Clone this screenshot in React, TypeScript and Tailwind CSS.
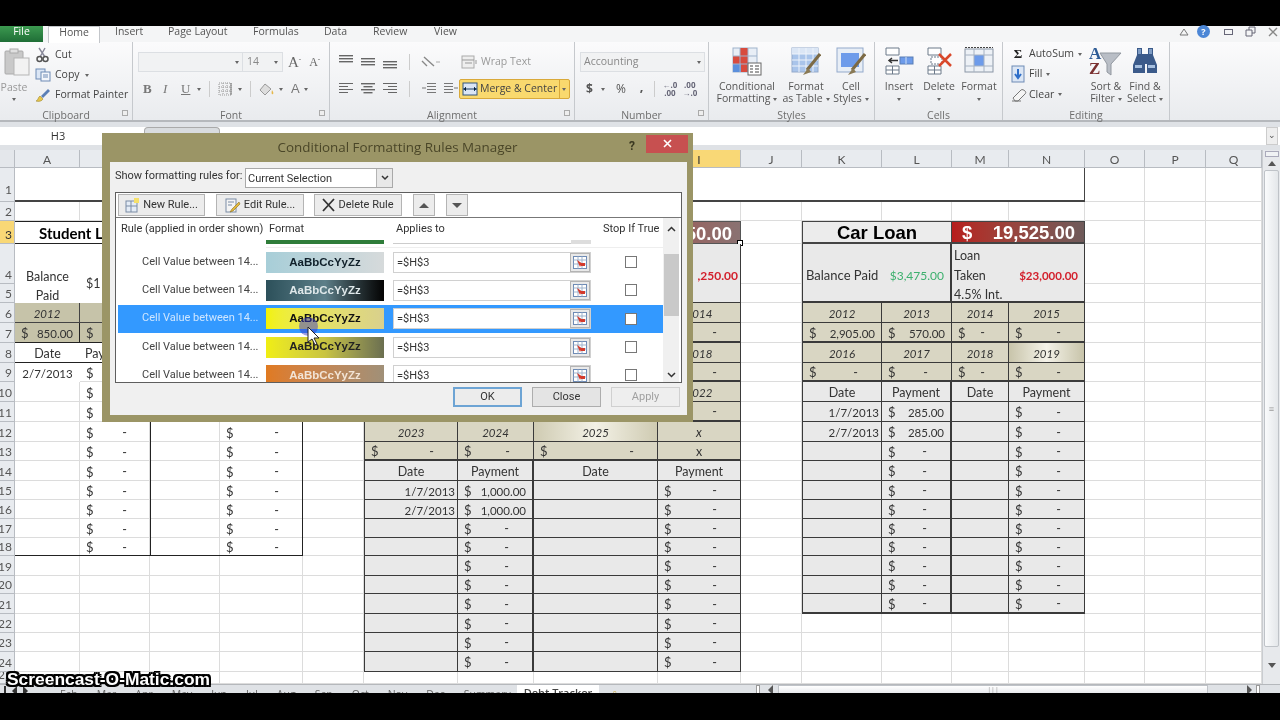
import type { ReactNode } from "react";

const COLS = ["A", "B", "C", "D", "E", "F", "G", "H", "I", "J", "K", "L", "M", "N", "O", "P", "Q"];
const ROW_COUNT = 25;

type Cell = { col: string; row: number; cs?: number; rs?: number; cls?: string; node?: ReactNode };

const box = "border-r border-b border-[#3a3a3a]";
const tan = "bg-[#d9d6c3]";
const gray = "bg-[#e9e9e9]";
const center = "justify-center";
const redText = "text-[#d3202c]";
const num = "text-[11.5px]";

function Acct({ v }: { v?: string }) {
  return (
    <div className="flex w-full items-center justify-between px-[6px]">
      <span className="text-[13px]">$</span>
      {v ? <span className={num}>{v}</span> : <span className="pr-[17px]">-</span>}
    </div>
  );
}

function buildCells(): Cell[] {
  const c: Cell[] = [];
  // row 1 banner
  c.push({ col: "A", row: 1, cs: 14, cls: "bg-white border-r border-b-2 border-[#444]" });

  // student loan block
  c.push({ col: "A", row: 3, cs: 5, cls: "bg-white border-y border-[#222] font-bold text-[15px] text-black", node: <span className="pl-[24px]">Student Loan</span> });
  c.push({ col: "A", row: 4, rs: 2, cls: `bg-white flex-col ${center}`, node: <span className="mt-[18px] text-center leading-[19px]">Balance<br />Paid</span> });
  c.push({ col: "B", row: 4, rs: 2, cls: "bg-white", node: <span className="pl-[6px] mt-[16px]">$1</span> });
  c.push({ col: "A", row: 6, cls: `bg-[#c6c3a9] italic ${num} ${center} border-r border-b border-[#444]`, node: "2012" });
  c.push({ col: "B", row: 6, cls: "bg-[#c6c3a9] border-b border-[#444]" });
  c.push({ col: "A", row: 7, cls: "bg-[#c6c3a9] border-r border-b border-[#222]", node: <Acct v="850.00" /> });
  c.push({ col: "B", row: 7, cls: "bg-[#c6c3a9] border-b border-[#222]", node: <Acct /> });
  c.push({ col: "A", row: 8, cls: `bg-white ${center} border-b border-[#222]`, node: "Date" });
  c.push({ col: "B", row: 8, cls: "bg-white border-b border-[#222]", node: <span className="pl-[5px]">Payment</span> });
  c.push({ col: "A", row: 9, cls: `bg-white ${num} ${center}`, node: "2/7/2013" });
  c.push({ col: "B", row: 9, node: <Acct /> });
  for (let r = 10; r <= 18; r++) {
    c.push({ col: "B", row: r, cls: r === 18 ? "border-b border-[#222]" : "", node: <Acct /> });
    c.push({ col: "C", row: r, cls: `border-l border-[#222] ${r === 18 ? "border-b" : ""}` });
    c.push({ col: "D", row: r, cls: `border-r border-[#222] ${r === 18 ? "border-b" : ""}`, node: <Acct /> });
  }
  c.push({ col: "A", row: 18, cls: "border-b border-[#222]" });

  // middle block, mostly behind the dialog
  c.push({ col: "H", row: 3, cs: 2, cls: "bg-gradient-to-r from-[#b02a2a] to-[#8a7272] border border-[#555] font-['Liberation_Sans',sans-serif] font-bold text-[18.5px] text-white justify-end", node: <><span className="pr-[8px]">50.00</span><span className="absolute -right-[3px] -bottom-[3px] w-[6px] h-[6px] bg-white border border-black" /></> });
  c.push({ col: "I", row: 4, rs: 2, cls: `${gray} ${box} justify-end font-bold ${redText} text-[12px]`, node: <span className="pr-[2px]">,250.00</span> });
  c.push({ col: "I", row: 6, cls: `${tan} ${box} italic ${num} ${center}`, node: "2014" });
  c.push({ col: "I", row: 7, cls: `${tan} ${box} border-b-2`, node: <Acct /> });
  c.push({ col: "I", row: 8, cls: `${tan} ${box} italic ${num} ${center}`, node: "2018" });
  c.push({ col: "I", row: 9, cls: `${tan} ${box} border-b-2`, node: <Acct /> });
  c.push({ col: "I", row: 10, cls: `${tan} ${box} italic ${num} ${center}`, node: "2022" });
  c.push({ col: "I", row: 11, cls: `${tan} ${box} border-b-2`, node: <Acct /> });
  c.push({ col: "F", row: 12, cls: `${tan} ${box} border-l italic ${num} ${center}`, node: "2023" });
  c.push({ col: "G", row: 12, cls: `${tan} ${box} italic ${num} ${center}`, node: "2024" });
  c.push({ col: "H", row: 12, cls: `bg-gradient-to-r from-[#cfcbb2] via-[#f3f1e6] to-[#cfcbb2] ${box} italic ${num} ${center}`, node: "2025" });
  c.push({ col: "I", row: 12, cls: `${tan} ${box} italic ${center}`, node: "x" });
  c.push({ col: "F", row: 13, cls: `${tan} ${box} border-l border-b-2`, node: <Acct /> });
  c.push({ col: "G", row: 13, cls: `${tan} ${box} border-b-2`, node: <Acct /> });
  c.push({ col: "H", row: 13, cls: `${tan} ${box} border-b-2`, node: <Acct /> });
  c.push({ col: "I", row: 13, cls: `${tan} ${box} border-b-2 ${center}`, node: "x" });
  c.push({ col: "F", row: 14, cls: `${gray} ${box} border-l ${center}`, node: "Date" });
  c.push({ col: "G", row: 14, cls: `${gray} ${box} border-r-2 ${center}`, node: "Payment" });
  c.push({ col: "H", row: 14, cls: `${gray} ${box} ${center}`, node: "Date" });
  c.push({ col: "I", row: 14, cls: `${gray} ${box} ${center}`, node: "Payment" });
  for (let r = 15; r <= 24; r++) {
    const paid = r < 17;
    c.push({ col: "F", row: r, cls: `${gray} ${box} border-l justify-end ${num}`, node: paid ? <span className="pr-[2px]">{r === 15 ? "1/7/2013" : "2/7/2013"}</span> : null });
    c.push({ col: "G", row: r, cls: `${gray} ${box} border-r-2`, node: paid ? <Acct v="1,000.00" /> : <Acct /> });
    c.push({ col: "H", row: r, cls: `${gray} ${box}` });
    c.push({ col: "I", row: r, cls: `${gray} ${box}`, node: <Acct /> });
  }

  // car loan block
  c.push({ col: "K", row: 3, cs: 2, cls: `bg-[#ececec] border border-[#444] border-b-2 ${center} font-['Liberation_Sans',sans-serif] font-bold text-[18.5px] text-black`, node: "Car Loan" });
  c.push({
    col: "M",
    row: 3,
    cs: 2,
    cls: "bg-gradient-to-r from-[#b71c1c] to-[#6e5a5a] border-y border-r border-[#444] border-b-2 font-['Liberation_Sans',sans-serif] font-bold text-[18.5px] text-white",
    node: <div className="flex w-full justify-between pl-[10px] pr-[9px]"><span>$</span><span>19,525.00</span></div>,
  });
  c.push({
    col: "K",
    row: 4,
    rs: 2,
    cs: 2,
    cls: `${gray} ${box} border-l border-b-2 border-r-2`,
    node: <div className="flex w-full items-center justify-between pl-[3px] pr-[6px]"><span className="text-[13px]">Balance Paid</span><span className="text-[12px] text-[#3db06e]">$3,475.00</span></div>,
  });
  c.push({
    col: "M",
    row: 4,
    rs: 2,
    cs: 2,
    cls: `${gray} ${box} border-b-2`,
    node: (
      <div className="flex w-full items-center justify-between pl-[2px] pr-[6px]">
        <span className="leading-[19.5px]">Loan<br />Taken<br />4.5% Int.</span>
        <span className={`font-bold text-[11.5px] ${redText}`}>$23,000.00</span>
      </div>
    ),
  });
  const carTop = [["2012", "2013", "2014", "2015"], ["2016", "2017", "2018", "2019"]];
  const carCols = ["K", "L", "M", "N"];
  carTop.forEach((years, i) => {
    years.forEach((y, j) => {
      const fancy = y === "2019";
      c.push({
        col: carCols[j],
        row: 6 + i * 2,
        cls: `${fancy ? "bg-gradient-to-r from-[#c8c4aa] via-[#f4f2e8] to-[#c8c4aa]" : tan} ${box} ${j === 0 ? "border-l" : ""} italic ${num} ${center}`,
        node: y,
      });
    });
  });
  const firstVals = ["2,905.00", "570.00"];
  carCols.forEach((k, j) => {
    c.push({ col: k, row: 7, cls: `${tan} ${box} ${j === 0 ? "border-l" : ""} border-b-2`, node: <Acct v={firstVals[j]} /> });
    c.push({ col: k, row: 9, cls: `${tan} ${box} ${j === 0 ? "border-l" : ""} border-b-2`, node: <Acct /> });
  });
  const heads = ["Date", "Payment", "Date", "Payment"];
  carCols.forEach((k, j) => {
    c.push({ col: k, row: 10, cls: `${gray} ${box} ${j === 0 ? "border-l" : ""} ${j === 1 ? "border-r-2" : ""} ${center}`, node: heads[j] });
  });
  for (let r = 11; r <= 21; r++) {
    const paid = r < 13;
    c.push({ col: "K", row: r, cls: `${gray} ${box} border-l justify-end ${num} ${r === 21 ? "border-b-2" : ""}`, node: paid ? <span className="pr-[2px]">{r === 11 ? "1/7/2013" : "2/7/2013"}</span> : null });
    c.push({ col: "L", row: r, cls: `${gray} ${box} border-r-2 ${r === 21 ? "border-b-2" : ""}`, node: paid ? <Acct v="285.00" /> : <Acct /> });
    c.push({ col: "M", row: r, cls: `${gray} ${box} ${r === 21 ? "border-b-2" : ""}` });
    c.push({ col: "N", row: r, cls: `${gray} ${box} ${r === 21 ? "border-b-2" : ""}`, node: <Acct /> });
  }
  return c;
}

function cellPad(row: number) {
  if (row === 3) return "pt-[2px]";
  if (row === 4) return "pt-[6px]";
  return "pt-[3px]";
}

function Sheet() {
  const rows = Array.from({ length: ROW_COUNT }, (_, i) => i + 1);
  const cells = buildCells();
  return (
    <div className="grid w-[1262px] grid-cols-[15px_65px_70px_70px_83px_61px_94px_76px_124px_83px_61px_80px_70px_57px_76px_60px_61px_56px] grid-rows-[18px_34px_19px_23px_40px_19px_20px_20px_20px_19px_20px_20px_20px_19px_20px_19px_19px_19px_18px_20px_18px_20px_19px_19px_20px_12px] font-['Lato',sans-serif] text-[12.5px] text-[#333] bg-white">
      <div className="bg-[#e4e7eb] border-r border-b border-[#b8bcc2]" style={{ gridColumn: 1, gridRow: 1 }} />
      {COLS.map((l, i) => (
        <div
          key={l}
          className={`flex items-center justify-center pt-[3px] border-r border-b border-[#b8bcc2] text-[12px] ${l === "I" ? "bg-[#f9d876]" : "bg-[#e8ebef] text-[#555]"}`}
          style={{ gridColumn: i + 2, gridRow: 1 }}
        >
          {l}
        </div>
      ))}
      {rows.map((r) => (
        <div
          key={r}
          className={`flex items-end justify-end pr-[2px] border-r border-b border-[#b8bcc2] text-[12px] leading-none overflow-hidden ${r === 1 ? "pb-[5px]" : "pb-[2px]"} ${r === 3 ? "bg-[#f9d876]" : "bg-[#e8ebef] text-[#555]"}`}
          style={{ gridColumn: 1, gridRow: r + 1 }}
        >
          {r}
        </div>
      ))}
      {rows.map((r) =>
        COLS.map((l, i) => (
          <div key={`${l}${r}`} className="border-r border-b border-[#dcdcdc]" style={{ gridColumn: i + 2, gridRow: r + 1 }} />
        ))
      )}
      {cells.map((c, i) => (
        <div
          key={i}
          className={`relative flex items-center whitespace-nowrap ${cellPad(c.row)} ${c.cls ?? ""}`}
          style={{ gridColumn: `${COLS.indexOf(c.col) + 2} / span ${c.cs ?? 1}`, gridRow: `${c.row + 1} / span ${c.rs ?? 1}` }}
        >
          {c.node}
        </div>
      ))}
    </div>
  );
}

/* ---------- ribbon icons ---------- */

function Lines({ ws, y = 3, color = "#666" }: { ws: number[]; y?: number; color?: string }) {
  return (
    <svg width="16" height="14" viewBox="0 0 16 14">
      {ws.map((w, i) => (
        <rect key={i} x={(16 - w) / 2} y={y + i * 3} width={w} height="1.4" fill={color} />
      ))}
    </svg>
  );
}

function Caret({ cls = "" }: { cls?: string }) {
  return <span className={`inline-block w-0 h-0 border-x-[2.5px] border-x-transparent border-t-[3px] border-t-[#666] ${cls}`} />;
}

function BigIcon({ kind }: { kind: string }) {
  if (kind === "cond")
    return (
      <svg width="30" height="30" viewBox="0 0 30 30">
        <rect x="1" y="2" width="24" height="24" fill="#e8eef6" stroke="#9fb3cc" />
        <rect x="8" y="2" width="8" height="8" fill="#d84b3e" />
        <rect x="1" y="10" width="15" height="8" fill="#d84b3e" />
        <rect x="1" y="18" width="8" height="8" fill="#5b8fdc" />
        <rect x="9" y="18" width="7" height="8" fill="#d84b3e" />
        <path d="M8 2v24M16 2v24M1 10h24M1 18h24" stroke="#9fb3cc" />
        <rect x="16" y="17" width="13" height="12" fill="#fff" stroke="#666" />
        <path d="M18 20h3M18 23h3M18 26h3M23 20h4M23 23h4M23 26h4" stroke="#444" />
      </svg>
    );
  if (kind === "table")
    return (
      <svg width="30" height="30" viewBox="0 0 30 30">
        <rect x="1" y="2" width="26" height="24" fill="#a9c4ea" stroke="#93aacb" />
        <rect x="1" y="2" width="26" height="6" fill="#dbe6f5" />
        <path d="M8 2v24M15 2v24M22 2v24M1 8h26M1 14h26M1 20h26" stroke="#eef3fa" />
        <path d="M29 8 16 24" stroke="#7c6a45" strokeWidth="3" />
        <path d="M17 22l-5 7 8-3z" fill="#8a7a55" />
      </svg>
    );
  if (kind === "style")
    return (
      <svg width="30" height="30" viewBox="0 0 30 30">
        <rect x="1" y="2" width="26" height="24" fill="#e8eef6" stroke="#93aacb" />
        <rect x="5" y="7" width="18" height="14" fill="#6d9bea" />
        <path d="M29 8 16 24" stroke="#7c6a45" strokeWidth="3" />
        <path d="M17 22l-5 7 8-3z" fill="#8a7a55" />
      </svg>
    );
  if (kind === "insert")
    return (
      <svg width="30" height="30" viewBox="0 0 30 30">
        <path d="M2 2h13v7H2zM2 20h13v8H2zM8.500 20v8M2 24h13" fill="#fff" stroke="#6d7a8a" />
        <rect x="16" y="11" width="13" height="7" fill="#6d9bea" stroke="#5a7fb5" />
        <path d="M22 11v7" stroke="#cfe0f5" />
        <path d="M14 14.500H5M8 12l-3 2.500 3 2.500" fill="none" stroke="#333" strokeWidth="1.500" />
      </svg>
    );
  if (kind === "delete")
    return (
      <svg width="30" height="30" viewBox="0 0 30 30">
        <path d="M4 2h13v7H4zM4 20h13v8H4zM10.500 20v8M4 24h13" fill="#fff" stroke="#6d7a8a" />
        <rect x="7" y="11" width="11" height="7" fill="#fff" stroke="#6d7a8a" strokeDasharray="2 1" />
        <path d="M15 8 27 20M27 8 15 20" stroke="#d9482b" strokeWidth="2.500" />
      </svg>
    );
  if (kind === "format")
    return (
      <svg width="30" height="30" viewBox="0 0 30 30">
        <rect x="1" y="3" width="28" height="23" fill="#edf1f6" stroke="#8a96a6" />
        <rect x="10" y="9" width="10" height="11" fill="#6d9bea" />
        <path d="M10 3v23M20 3v23M1 9h28M1 20h28" stroke="#a6b2c2" />
        <path d="M1 1.500h28" stroke="#444" strokeDasharray="2 1" />
      </svg>
    );
  if (kind === "sort")
    return (
      <svg width="32" height="30" viewBox="0 0 32 30">
        <path d="M10 7 31 7 21 18V29L17 26V18Z" fill="#b9bec6" stroke="#9298a0" />
      </svg>
    );
  return (
    <svg width="30" height="30" viewBox="0 0 30 30">
      <path d="M7 2h5v6h6V2h5v7l4 10v8h-10v-9h-2v9H3v-8l4-10z" fill="#3b5a8a" />
      <path d="M5 19h7v3H5zM18 19h7v3h-7z" fill="#a7c0e0" />
      <path d="M8 3h3v5H8zM19 3h3v5h-3z" fill="#7f9cc4" />
    </svg>
  );
}

function SmallIcon({ kind }: { kind: string }) {
  if (kind === "cut")
    return (
      <svg width="14" height="16" viewBox="0 0 14 16">
        <path d="M3 1l6 9M9 1 4 10" stroke="#889" strokeWidth="1.400" />
        <circle cx="3.500" cy="12" r="2.500" fill="none" stroke="#555" strokeWidth="1.500" />
        <circle cx="9.500" cy="12" r="2.500" fill="none" stroke="#555" strokeWidth="1.500" />
      </svg>
    );
  if (kind === "copy")
    return (
      <svg width="16" height="14" viewBox="0 0 16 14">
        <rect x="1" y="1" width="9" height="10" fill="#dbe6f5" stroke="#6e8bb5" />
        <rect x="6" y="4" width="9" height="9" fill="#f3f6fb" stroke="#6e8bb5" />
        <path d="M8 7h5M8 9h5" stroke="#6e8bb5" />
      </svg>
    );
  if (kind === "painter")
    return (
      <svg width="16" height="16" viewBox="0 0 16 16">
        <path d="M6 9 13 2l2 2-7 7z" fill="#5a7fb5" />
        <path d="M1 14c2 0 2-4 4-5l3 3c-1 2-4 3-7 2z" fill="#e8c64b" stroke="#a08a30" strokeWidth=".6" />
      </svg>
    );
  if (kind === "fill")
    return (
      <svg width="14" height="18" viewBox="0 0 14 18">
        <rect x="1" y="1" width="12" height="16" fill="#dbe6f5" stroke="#6e8bb5" />
        <path d="M7 4v8M4 9l3 4 3-4" fill="none" stroke="#2f6fc9" strokeWidth="2" />
      </svg>
    );
  return (
    <svg width="16" height="14" viewBox="0 0 16 14">
      <path d="M2 10 10 2c1-1 3 0 4 1s1 2 0 3l-7 7H4z" fill="#f4f4f4" stroke="#777" />
      <path d="M1 13h9" stroke="#777" />
    </svg>
  );
}

function RibbonGroup({ w, label, launcher, children }: { w: string; label: string; launcher?: boolean; children: ReactNode }) {
  return (
    <div className={`flex flex-col h-full shrink-0 border-r border-[#c6c9cd] ${w}`}>
      <div className="flex-1 flex min-h-0">{children}</div>
      <div className="relative h-[16px] pt-[3px] text-center text-[10.5px] leading-[16px] text-[#6d6d6d]">
        {label}
        {launcher && <span className="absolute right-[4px] top-[6px] w-[6px] h-[6px] border border-[#aaa] bg-[#eee]" />}
      </div>
    </div>
  );
}

function BigButton({ kind, top, bottom, caret = true, w }: { kind: string; top: string; bottom?: string; caret?: boolean; w: string }) {
  return (
    <div className={`flex flex-col items-center shrink-0 ${w}`}>
      <div className="h-[34px] pt-[4px] flex items-start justify-center">
        <BigIcon kind={kind} />
      </div>
      <div className="mt-[4px] text-center text-[10.5px] leading-[12px] text-[#555] whitespace-nowrap">
        {top}
        <br />
        {bottom}
        {bottom && caret && <Caret cls="ml-[3px] mb-[1px]" />}
        {!bottom && <Caret cls="mb-[1px]" />}
      </div>
    </div>
  );
}

function Ribbon() {
  return (
    <div className="h-[80px] flex bg-gradient-to-b from-[#fbfbfc] to-[#e9ebee] border-b-2 border-[#b5b8bc] font-['Open_Sans',sans-serif] text-[10.5px] text-[#555]">
      <RibbonGroup w="w-[133px]" label="Clipboard" launcher>
        <div className="w-[34px] flex flex-col items-center pt-[6px] text-[#999]">
          <svg width="26" height="28" viewBox="0 0 26 28">
            <rect x="1" y="3" width="18" height="23" rx="1" fill="#c9c9c9" stroke="#aaa" />
            <rect x="6" y="1" width="8" height="4" fill="#e0e0e0" stroke="#aaa" />
            <rect x="10" y="10" width="15" height="17" fill="#f2f2f2" stroke="#b5b5b5" />
          </svg>
          <span className="mt-[4px] -ml-[6px]">Paste</span>
          <Caret cls="-ml-[6px] mt-[2px]" />
        </div>
        <div className="flex flex-col pt-[3px]">
          <div className="h-[20px] shrink-0 flex items-center gap-[3px]"><span className="w-[18px] flex justify-center"><SmallIcon kind="cut" /></span><span className="text-[#444]">Cut</span></div>
          <div className="h-[20px] shrink-0 flex items-center gap-[3px]"><span className="w-[18px] flex justify-center"><SmallIcon kind="copy" /></span><span className="text-[#444]">Copy</span><Caret cls="ml-[2px]" /></div>
          <div className="h-[20px] shrink-0 flex items-center gap-[3px]"><span className="w-[18px] flex justify-center"><SmallIcon kind="painter" /></span><span className="text-[#444] whitespace-nowrap">Format Painter</span></div>
        </div>
      </RibbonGroup>

      <RibbonGroup w="w-[197px]" label="Font" launcher>
        <div className="flex flex-col pl-[5px] pt-[10px]">
          <div className="flex items-center h-[20px]">
            <div className="w-[105px] h-[20px] bg-[#f1f2f3] border border-[#dcdfe3] flex items-center justify-end pr-[3px]"><Caret /></div>
            <div className="w-[40px] h-[20px] bg-[#f1f2f3] border border-l-0 border-[#dcdfe3] flex items-center justify-between px-[4px] text-[#888]">14<Caret /></div>
            <span className="ml-[5px] font-['Liberation_Serif',serif] text-[15px] text-[#666]">A<sup className="text-[7px]">ˆ</sup></span>
            <span className="ml-[8px] font-['Liberation_Serif',serif] text-[12px] text-[#666]">A<sup className="text-[7px]">ˇ</sup></span>
          </div>
          <div className="flex items-center h-[20px] mt-[7px] pl-[5px] text-[#777] font-['Liberation_Serif',serif] text-[13px]">
            <b className="w-[20px]">B</b>
            <i className="w-[18px]">I</i>
            <u className="w-[12px]">U</u>
            <Caret cls="ml-[4px]" />
            <span className="ml-[8px] mr-[8px] w-px h-[16px] bg-[#ccc]" />
            <svg width="14" height="14" viewBox="0 0 14 14"><path d="M1 1h12v12H1zM5 1v12M9 1v12M1 5h12M1 9h12" fill="none" stroke="#999" strokeDasharray="1 1" /><path d="M13 1v12" stroke="#777" /></svg>
            <Caret cls="ml-[6px]" />
            <span className="ml-[8px] mr-[8px] w-px h-[16px] bg-[#ccc]" />
            <svg width="16" height="15" viewBox="0 0 16 15"><path d="M6 2 1 8l5 5 6-6z" fill="#ddd" stroke="#999" /><path d="M13 8c1 2 2 3 1 4s-2 0-1-4z" fill="#e6b84a" /></svg>
            <Caret cls="ml-[4px]" />
            <span className="ml-[8px] font-['Liberation_Sans',sans-serif] text-[13px]">A</span>
            <Caret cls="ml-[4px]" />
          </div>
        </div>
      </RibbonGroup>

      <RibbonGroup w="w-[245px]" label="Alignment" launcher>
        <div className="flex flex-col pl-[8px] pt-[10px] w-[129px]">
          <div className="flex items-center h-[20px] gap-[6px]">
            <Lines ws={[14, 14, 14]} y={0} />
            <Lines ws={[14, 14, 14]} y={3} />
            <Lines ws={[14, 14, 14]} y={6} />
            <span className="mx-[5px] w-px h-[16px] bg-[#ccc]" />
            <svg width="20" height="14" viewBox="0 0 20 14"><path d="M3 2 13 11M1 6l5 5" stroke="#888" strokeWidth="1.400" /><path d="M15 7h4" stroke="#aaa" /></svg>
          </div>
          <div className="flex items-center h-[20px] mt-[7px] gap-[6px]">
            <svg width="16" height="14" viewBox="0 0 16 14"><path d="M1 1.500h14M1 4.500h9M1 7.500h14M1 10.500h9" stroke="#666" strokeWidth="1.200" /></svg>
            <Lines ws={[14, 9, 14, 9]} y={1} />
            <svg width="16" height="14" viewBox="0 0 16 14"><path d="M1 1.500h14M6 4.500h9M1 7.500h14M6 10.500h9" stroke="#666" strokeWidth="1.200" /></svg>
            <span className="mx-[5px] w-px h-[16px] bg-[#ccc]" />
            <svg width="16" height="14" viewBox="0 0 16 14"><path d="M6 1.500h9M6 4.500h9M6 7.500h9M6 10.500h9M1 6h4" stroke="#777" strokeWidth="1.200" /></svg>
            <svg width="16" height="14" viewBox="0 0 16 14"><path d="M1 1.500h9M1 4.500h9M1 7.500h9M1 10.500h9M11 6h4" stroke="#777" strokeWidth="1.200" /></svg>
          </div>
        </div>
        <div className="flex flex-col pt-[10px] w-[111px]">
          <div className="h-[20px] flex items-center gap-[2px] pl-[2px] text-[#999]">
            <svg width="18" height="14" viewBox="0 0 18 14"><rect x="1" y="1" width="12" height="12" fill="#eee" stroke="#aaa" /><path d="M1 5h12M4 8h7M15 5v4" stroke="#999" /></svg>
            Wrap Text
          </div>
          <div className="h-[20px] mt-[7px] flex items-center bg-[#f9d96e] border border-[#d9a93a] rounded-[2px] text-[#444] whitespace-nowrap">
            <svg className="mx-[2px] shrink-0" width="16" height="14" viewBox="0 0 16 14"><rect x="1" y="1" width="14" height="12" fill="#dbe6f5" stroke="#33567d" /><path d="M1 7h14M4 5 2 7l2 2M12 5l2 2-2 2" stroke="#1c3e63" /></svg>
            Merge &amp; Center
            <span className="ml-[2px] h-full flex items-center border-l border-[#d9a93a] pl-[2px]"><Caret /></span>
          </div>
        </div>
      </RibbonGroup>

      <RibbonGroup w="w-[134px]" label="Number" launcher>
        <div className="flex flex-col pl-[5px] pt-[10px]">
          <div className="w-[125px] h-[20px] bg-[#f1f2f3] border border-[#dcdfe3] flex items-center justify-between px-[3px] text-[#888]">Accounting<Caret /></div>
          <div className="flex items-center h-[20px] mt-[7px] text-[#555]">
            <b className="ml-[6px] text-[12px]">$</b>
            <Caret cls="ml-[8px]" />
            <span className="ml-[11px] text-[12px]">%</span>
            <b className="ml-[14px] text-[13px] -mt-[4px]">,</b>
            <span className="ml-[10px] mr-[8px] w-px h-[16px] bg-[#ccc]" />
            <span className="text-[8px] leading-[8px] text-center font-bold text-[#667]">←.0<br />.00</span>
            <span className="ml-[5px] text-[8px] leading-[8px] text-center font-bold text-[#667]">.00<br />→.0</span>
          </div>
        </div>
      </RibbonGroup>

      <RibbonGroup w="w-[166px]" label="Styles">
        <BigButton kind="cond" top="Conditional" bottom="Formatting" w="w-[76px]" />
        <BigButton kind="table" top="Format" bottom="as Table" w="w-[42px]" />
        <BigButton kind="style" top="Cell" bottom="Styles" w="w-[48px]" />
      </RibbonGroup>

      <RibbonGroup w="w-[128px]" label="Cells">
        <div className="flex pl-[4px]">
          <BigButton kind="insert" top="Insert" w="w-[40px]" />
          <BigButton kind="delete" top="Delete" w="w-[40px]" />
          <BigButton kind="format" top="Format" w="w-[40px]" />
        </div>
      </RibbonGroup>

      <RibbonGroup w="w-[167px]" label="Editing">
        <div className="w-[84px] flex flex-col pl-[8px] pt-[2px] text-[#444]">
          <div className="h-[20px] shrink-0 flex items-center gap-[4px]"><b className="w-[14px] text-center text-[13px] font-['Liberation_Serif',serif] text-[#222]">Σ</b>AutoSum<Caret /></div>
          <div className="h-[20px] shrink-0 flex items-center gap-[4px]"><span className="w-[14px]"><SmallIcon kind="fill" /></span>Fill<Caret /></div>
          <div className="h-[21px] shrink-0 flex items-center gap-[4px]"><span className="w-[14px]"><SmallIcon kind="clear" /></span>Clear<Caret /></div>
        </div>
        <div className="relative">
          <BigButton kind="sort" top="Sort &" bottom="Filter" w="w-[38px]" />
          <span className="absolute left-[2px] top-[4px] font-['Liberation_Serif',serif] font-bold text-[17px] leading-[15px] text-[#2f5c96]">A<br /><span className="text-[#7a3030]">Z</span></span>
        </div>
        <BigButton kind="find" top="Find &" bottom="Select" w="w-[40px]" />
      </RibbonGroup>
    </div>
  );
}

function TitleTabs() {
  const tabs = [
    ["Insert", "w-[26px]"],
    ["Page Layout", "w-[58px]"],
    ["Formulas", "w-[44px]"],
    ["Data", "w-[22px]"],
    ["Review", "w-[34px]"],
    ["View", "w-[22px]"],
  ];
  return (
    <div className="h-[16px] flex items-center bg-[#f4f5f6] font-['Open_Sans',sans-serif] text-[10.5px] text-[#555]">
      <div className="w-[43px] h-full bg-gradient-to-b from-[#3c9a50] to-[#1f6e37] text-white text-center leading-[10px]">File</div>
      <div className="ml-[5px] w-[52px] h-[17px] bg-white border-x border-t border-[#c3c6ca] text-center leading-[11px] self-start z-10">Home</div>
      <div className="flex ml-[15px] gap-[27px] -mt-[4px]">
        {tabs.map(([t, w]) => (
          <span key={t} className={`whitespace-nowrap ${w}`}>{t}</span>
        ))}
      </div>
      <div className="ml-auto flex items-center pr-[2px] -mt-[5px]">
        <svg width="10" height="10" viewBox="0 0 10 10"><path d="M1 8 5 2l4 6z" fill="none" stroke="#777" /></svg>
        <span className="ml-[8px] w-[13px] h-[13px] rounded-full bg-[#4b86d6] text-white text-[9px] leading-[13px] text-center font-bold">?</span>
        <span className="ml-[14px] w-[9px] h-[6px] border border-[#667] " />
        <svg className="ml-[12px]" width="11" height="11" viewBox="0 0 11 11"><path d="M1 4h6v6H1zM4 4V1h6v6H7" fill="none" stroke="#667" /></svg>
        <svg className="ml-[12px]" width="10" height="10" viewBox="0 0 10 10"><path d="M1 1l8 8M9 1 1 9" stroke="#888" strokeWidth="1.400" /></svg>
      </div>
    </div>
  );
}

function FormulaBar() {
  return (
    <div className="h-[28px] pt-[5px] bg-[#dfe2e6] font-['Open_Sans',sans-serif] text-[11px] text-[#333]">
      <div className="flex h-[18px] bg-white">
        <div className="w-[102px] text-center pl-[14px] leading-[18px]">H3</div>
        <div className="ml-[42px] w-[76px] h-[6px] bg-[#d9dcdf] border-x border-t border-[#aaa] rounded-t-[4px]" />
        <div className="flex-1" />
        <div className="w-[12px] mr-[2px] text-center text-[9px] text-[#555] border border-[#ccc] bg-[#eee]">⌄</div>
      </div>
    </div>
  );
}

function VScroll() {
  return (
    <div className="w-[18px] flex flex-col items-center bg-[#e7e9ec] border-l border-[#c9ccd0]">
      <div className="w-[14px] h-[6px] mt-[1px] bg-[#f0f2f4] border border-[#aab]" />
      <div className="h-[13px] flex items-center"><span className="w-0 h-0 border-x-[4px] border-x-transparent border-b-[5px] border-b-[#555]" /></div>
      <div className="w-[15px] h-[477px] bg-gradient-to-r from-[#fafbfc] to-[#e4e7ea] border border-[#bfc3c8] rounded-[2px] flex items-center justify-center mt-[0px]">
        <span className="text-[9px] text-[#999] leading-none">≡</span>
      </div>
      <div className="flex-1 flex items-center"><span className="w-0 h-0 border-x-[4px] border-x-transparent border-t-[5px] border-t-[#555]" /></div>
    </div>
  );
}

function SheetTabs() {
  const names = ["Feb", "Mar", "Apr", "May", "Jun", "Jul", "Aug", "Sep", "Oct", "Nov", "Dec", "Summary"];
  return (
    <div className="h-[9px] flex bg-[#dfe2e6] overflow-hidden font-['Open_Sans',sans-serif] text-[10.5px] leading-[14px] text-[#666] border-t border-[#b5b8bc]">
      <div className="w-[60px] pl-[4px] flex gap-[6px] pt-[1px]">
        <span className="w-[2px] h-[8px] bg-[#333]" />
        <span className="w-0 h-0 border-y-[5px] border-y-transparent border-r-[5px] border-r-[#333]" />
        <span className="w-0 h-0 border-y-[5px] border-y-transparent border-l-[5px] border-l-[#333]" />
      </div>
      <div className="w-[457px] flex gap-[19px] pt-[2px] whitespace-nowrap">
        {names.map((n) => <span key={n}>{n}</span>)}
      </div>
      <div className="w-[82px] -mt-[1px] text-center bg-white font-semibold text-[11px] text-[#444] whitespace-nowrap pt-[2px]">Debt Tracker</div>
      <div className="ml-[12px] text-[#c8a030] pt-[1px]">♀</div>
      <div className="flex-1" />
      <div className="w-[524px] flex items-start relative">
        <span className="w-[4px] h-[9px] border border-[#999] bg-white" />
        <span className="ml-[8px] w-0 h-0 border-y-[5px] border-y-transparent border-r-[5px] border-r-[#555]" />
        <div className="ml-[5px] w-[430px] h-[9px] bg-gradient-to-b from-white to-[#e8eaee] border border-[#bfc3c8] text-center text-[7px] leading-[8px] text-[#999]">|||</div>
        <div className="flex-1" />
        <span className="w-0 h-0 border-y-[5px] border-y-transparent border-l-[5px] border-l-[#555]" />
        <span className="ml-[4px] mr-[20px] w-[4px] h-[9px] border border-[#999] bg-white" />
      </div>
    </div>
  );
}

/* ---------- dialog ---------- */

const swatches = [
  { cls: "bg-gradient-to-r from-[#a7ced8] to-[#d6dadb]", text: "text-[#10202a]" },
  { cls: "bg-gradient-to-r from-[#2c505a] via-[#5d7f89] to-[#050505]", text: "text-[#dfe8ea]" },
  { cls: "bg-gradient-to-r from-[#f2f200] to-[#d9d08d]", text: "text-[#111]" },
  { cls: "bg-gradient-to-r from-[#f0ee10] via-[#c9c440] to-[#6b6f50]", text: "text-[#222]" },
  { cls: "bg-gradient-to-r from-[#e07a20] to-[#a09078]", text: "text-[#f2e4d6]" },
];

function RangeBtn() {
  return (
    <div className="w-[20px] h-full flex items-center justify-center bg-[#e9e9e9] border border-[#b4b4b4]">
      <svg width="14" height="13" viewBox="0 0 14 13">
        <rect x=".5" y=".5" width="13" height="12" fill="#fff" stroke="#6e8bb5" />
        <path d="M.5 4h13M.5 8h13M5 .5v12M9 .5v12" stroke="#9fb3cc" />
        <path d="M4 4l6 4-2 1-1 2z" fill="#d33a2c" />
        <rect x="8" y="7" width="4" height="3" fill="#d33a2c" />
      </svg>
    </div>
  );
}

function RuleRow({ i }: { i: number }) {
  const s = swatches[i];
  const selected = i === 2;
  return (
    <div className={`h-[28.3px] shrink-0 ml-[2px] flex items-center pl-[24px] ${selected ? "bg-[#3399ff] text-[#cfe6ff]" : "text-[#444]"}`}>
      <span className="w-[124px] whitespace-nowrap">Cell Value between 14...</span>
      <div className={`w-[118px] h-[21px] shrink-0 flex items-center justify-center font-['Liberation_Sans',sans-serif] font-bold text-[11.5px] ${s.cls} ${s.text}`}>AaBbCcYyZz</div>
      <div className="ml-[9px] w-[198px] h-[21px] flex bg-white border border-[#d0d0d0]">
        <span className="flex-1 pl-[3px] leading-[19px] text-[#333]">=$H$3</span>
        <RangeBtn />
      </div>
      <span className="ml-[34px] w-[12px] h-[12px] bg-white border border-[#777]" />
    </div>
  );
}

function DialogBtn({ label, w, cls = "", icon }: { label: string; w: string; cls?: string; icon?: ReactNode }) {
  return (
    <div className={`h-[22px] flex items-center justify-center gap-[3px] bg-[#ececec] border border-[#b4b4b4] text-[#333] ${w} ${cls}`}>
      {icon}
      {label}
    </div>
  );
}

function Dialog() {
  return (
    <div className="absolute left-[102px] top-[133px] w-[591px] h-[289px] flex flex-col bg-[#9b9566] pl-[8px] pr-[6px] pb-[7px] font-['Roboto',sans-serif] text-[11px] text-[#333]">
      <div className="h-[29px] shrink-0 flex items-center -ml-[8px] -mr-[6px]">
        <div className="flex-1 text-center font-['Open_Sans',sans-serif] text-[13.4px] text-[#4a4628] pl-[64px]">Conditional Formatting Rules Manager</div>
        <span className="mb-[4px] mr-[11px] font-bold text-[12px] text-[#3a3820]">?</span>
        <div className="w-[42px] h-[18px] mb-[8px] mr-[5px] bg-[#c75050] flex items-center justify-center">
          <svg width="9" height="9" viewBox="0 0 9 9"><path d="M1 1l7 7M8 1 1 8" stroke="#fff" strokeWidth="1.600" /></svg>
        </div>
      </div>
      <div className="flex-1 min-h-0 bg-[#f0f0f0] px-[5px] flex flex-col">
        <div className="h-[20px] mt-[6px] shrink-0 flex items-center">
          <span className="w-[130px] -mt-[4px] whitespace-nowrap">Show formatting rules for:</span>
          <div className="w-[148px] h-[20px] flex bg-white border border-[#a9a9a9]">
            <span className="flex-1 pl-[2px] leading-[19px]">Current Selection</span>
            <span className="w-[16px] flex items-center justify-center bg-[#e8e8e8] border-l border-[#b4b4b4] text-[#333]">
              <svg width="8" height="6" viewBox="0 0 8 6"><path d="M1 1l3 3 3-3" fill="none" stroke="#333" strokeWidth="1.500" /></svg>
            </span>
          </div>
        </div>

        <div className="mt-[4px] h-[191px] shrink-0 flex flex-col bg-white border border-[#5e5e5e] overflow-hidden">
          <div className="h-[25px] shrink-0 flex items-start pt-[1px] pl-[2px] bg-white border-b border-[#777]">
            <DialogBtn
              label="New Rule..."
              w="w-[87px]"
              icon={
                <svg width="15" height="15" viewBox="0 0 15 15"><rect x="1" y="3" width="11" height="11" fill="#e4ecf6" stroke="#7a8ca5" /><path d="M1 8h11M6 3v11" stroke="#7a8ca5" /><rect x="9" y="0" width="5" height="5" fill="#f5e06a" /></svg>
              }
            />
            <DialogBtn
              label="Edit Rule..."
              w="w-[88px]"
              cls="ml-[11px]"
              icon={
                <svg width="16" height="15" viewBox="0 0 16 15"><rect x="1" y="1" width="10" height="13" fill="#f4f4f4" stroke="#7a8ca5" /><path d="M3 4h6M3 7h4" stroke="#7a8ca5" /><path d="M14 4 7 11l-2 3 3-1 7-7z" fill="#e3b93c" stroke="#8a6f20" strokeWidth=".6" /></svg>
              }
            />
            <DialogBtn
              label="Delete Rule"
              w="w-[88px]"
              cls="ml-[10px]"
              icon={
                <svg width="13" height="14" viewBox="0 0 13 14"><path d="M1 1l11 12M12 1 1 13" stroke="#333" strokeWidth="1.800" /></svg>
              }
            />
            <div className="ml-[11px] w-[22px] h-[22px] flex items-center justify-center bg-[#ececec] border border-[#b4b4b4]"><span className="w-0 h-0 border-x-[5px] border-x-transparent border-b-[5px] border-b-[#555]" /></div>
            <div className="ml-[11px] w-[22px] h-[22px] flex items-center justify-center bg-[#ececec] border border-[#b4b4b4]"><span className="w-0 h-0 border-x-[5px] border-x-transparent border-t-[5px] border-t-[#555]" /></div>
          </div>
          <div className="flex flex-1 min-h-0">
            <div className="w-[547px] flex flex-col overflow-hidden">
              <div className="h-[22px] shrink-0 flex items-center whitespace-nowrap">
                <span className="w-[153px] pl-[5px]">Rule (applied in order shown)</span>
                <span className="w-[127px]">Format</span>
                <span className="w-[207px]">Applies to</span>
                <span>Stop If True</span>
              </div>
              <div className="h-[8px] shrink-0 ml-[150px] flex items-start border-b border-[#eee]">
                <div className="w-[118px] h-[4px] bg-[#2f7d3a]" />
                <div className="ml-[9px] w-[178px] h-[4px] border-b border-[#ccc]" />
                <div className="w-[20px] h-[4px] bg-[#ddd]" />
              </div>
              {[0, 1, 2, 3, 4].map((i) => <RuleRow key={i} i={i} />)}
            </div>
            <div className="w-[16px] flex flex-col items-center bg-[#f0f0f0]">
              <svg className="mt-[8px]" width="9" height="6" viewBox="0 0 9 6"><path d="M1 5l3.500-3.500L8 5" fill="none" stroke="#333" strokeWidth="1.500" /></svg>
              <div className="mt-[22px] w-[15px] h-[62px] bg-[#c9c9c9]" />
              <svg className="mt-auto mb-[4px]" width="9" height="6" viewBox="0 0 9 6"><path d="M1 1l3.500 3.500L8 1" fill="none" stroke="#333" strokeWidth="1.500" /></svg>
            </div>
          </div>
        </div>

        <div className="mt-[4px] h-[20px] shrink-0 flex justify-end gap-[10px] pr-[2px]">
          <div className="w-[69px] h-[20px] leading-[16px] text-center bg-[#ececec] border-2 border-[#6da4d4]">OK</div>
          <div className="w-[69px] h-[20px] leading-[18px] text-center bg-[#e4e4e4] border border-[#adadad]">Close</div>
          <div className="w-[69px] h-[20px] leading-[18px] text-center bg-[#eeeeee] border border-[#d0d0d0] text-[#a0a0a0]">Apply</div>
        </div>
      </div>
    </div>
  );
}

export default function App() {
  return (
    <div className="relative w-[1280px] h-[720px] overflow-hidden bg-black blur-[0.4px]">
      <div className="h-[26px]" />
      <TitleTabs />
      <Ribbon />
      <FormulaBar />
      <div className="flex h-[534px]">
        <Sheet />
        <VScroll />
      </div>
      <SheetTabs />

      <Dialog />

      {/* cursor highlight from the screen recorder */}
      <div className="absolute left-[299px] top-[317px] w-[19px] h-[19px] rounded-full bg-[#3a3ac8]/50" />
      <svg className="absolute left-[307px] top-[326px]" width="13" height="20" viewBox="0 0 13 20">
        <path d="M1 1v15l4-3 3 6 2-1-3-6h5z" fill="#fff" stroke="#222" />
      </svg>

      <div className="absolute left-[7px] top-[668px] font-['Liberation_Sans',sans-serif] font-bold text-[17.4px] leading-[22px] text-white [text-shadow:-2px_0_0_#000,2px_0_0_#000,0_-2px_0_#000,0_2px_0_#000,-2px_-2px_0_#000,2px_-2px_0_#000,-2px_2px_0_#000,2px_2px_0_#000]">
        Screencast-O-Matic.com
      </div>
    </div>
  );
}
